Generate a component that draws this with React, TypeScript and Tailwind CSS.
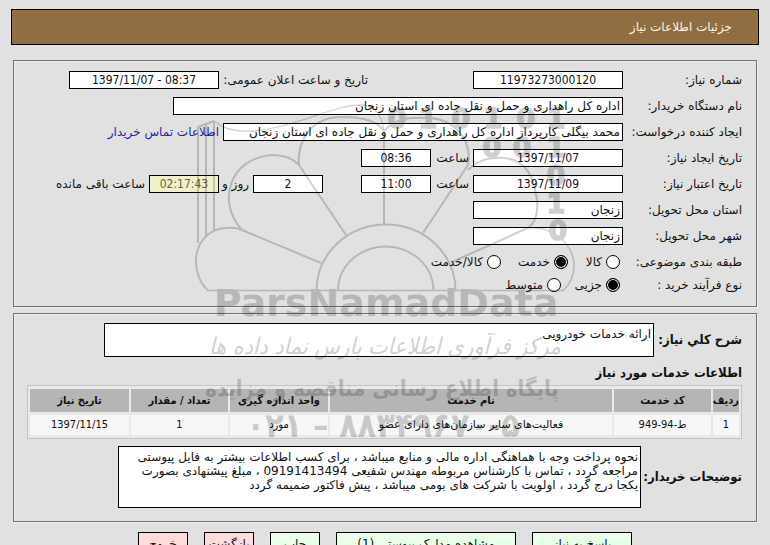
import React from "react";

const NUM = "font-['DejaVu_Sans_Condensed','DejaVu_Sans',sans-serif]";
const STRONG = "font-['DejaVu_Sans_Condensed','DejaVu_Sans',sans-serif] text-[13px] font-bold whitespace-nowrap";
const FIELD = "h-[18px] shrink-0 border border-black bg-white px-[2px] text-xs leading-4 outline-none";

function Row({ label, htmlFor, children }: { label: string; htmlFor?: string; children: React.ReactNode }) {
  return (
    <div className="flex h-[18px] items-center gap-1">
      <label htmlFor={htmlFor} className="w-[115px] shrink-0 whitespace-nowrap">
        {label}
      </label>
      {children}
    </div>
  );
}

function Radio({ name, label, checked, width }: { name: string; label: string; checked?: boolean; width: string }) {
  return (
    <label className={"flex items-center gap-1 whitespace-nowrap " + width}>
      <input
        type="radio"
        name={name}
        defaultChecked={checked}
        className="size-[14px] shrink-0 appearance-none rounded-full border border-black bg-white checked:bg-black checked:shadow-[inset_0_0_0_1px_white]"
      />
      {label}
    </label>
  );
}

const DIGITS = [
  { d: "0", x: 397, y: 128 },
  { d: "1", x: 428, y: 128 },
  { d: "0", x: 461, y: 128 },
  { d: "1", x: 493, y: 128 },
  { d: "0", x: 526, y: 128 },
  { d: "1", x: 556, y: 128 },
  { d: "0", x: 492, y: 157 },
  { d: "0", x: 522, y: 157 },
  { d: "1", x: 556, y: 157 },
  { d: "0", x: 556, y: 185 },
  { d: "1", x: 556, y: 213 },
  { d: "0", x: 558, y: 240 },
];

function Watermark() {
  return (
    <svg
      aria-hidden="true"
      viewBox="185 90 400 370"
      direction="ltr"
      className="pointer-events-none absolute top-[90px] left-1/2 h-[370px] w-[400px] -translate-x-1/2 opacity-[0.18]"
    >
      <g fill="none" stroke="#000" strokeWidth="2">
        <path d="M208 290.5H563" strokeWidth="1.3" />
        <path d="M316.5 290.5a69.5 66 0 0 1 139 0M338 290.5a47.7 44 0 0 1 95.4 0" />
        <path d="M208 290.5C190 274 191 237 219 229Q234 226 242 230L321 263" />
        <path d="M242 230C216 201 230 158 272 155Q290 155 299 165L346 235" />
        <path d="M299 165C297 140 312 116 343 117Q375 117 384 131V225" />
        <path d="M384 131C396 118 410 117 430 118C455 120 472 139 468 165L423 233" />
        <path d="M468 170C480 157 501 155 516 161C530 168 534 181 537 200Q539 220 528 228L452 262" />
        <path d="M528 228C547 226 570 238 574 262Q575 280 563 290.5" strokeWidth="1.5" />
        <path d="M198 243V127L214 121M206 237V124M214 230V121" />
        <path d="M214 121C230 135 255 132 278 127C312 119 340 104 364 105Q381 108 384 131" strokeWidth="1.2" />
      </g>
      <g textAnchor="middle" fontSize="27" stroke="#000" strokeWidth="1.5" className="font-['DejaVu_Sans'] font-bold">
        {DIGITS.map((g, i) => (
          <text key={i} x={g.x} y={g.y}>
            {g.d}
          </text>
        ))}
      </g>
      <text x="386" y="316" textAnchor="middle" fontSize="38" className="font-['DejaVu_Sans'] font-bold">
        ParsNamadData
      </text>
      <g textAnchor="middle" direction="rtl">
        <text x="385" y="354" fontSize="23" className="font-['DejaVu_Sans_Condensed'] italic">
          مرکز فرآوری اطلاعات پارس نماد داده ها
        </text>
        <text x="382" y="396" fontSize="22" className="font-['DejaVu_Sans_Condensed'] font-bold">
          پایگاه اطلاع رسانی مناقصه و مزایده
        </text>
      </g>
      <text x="383" y="437" textAnchor="middle" fontSize="34" className="font-['DejaVu_Sans_Condensed'] font-bold">
        ۰۲۱ – ۸۸۳۴۹۶۷۰-۵
      </text>
    </svg>
  );
}

const TH = "h-[23px] bg-[#b5b5b5] p-0 text-center text-[11px] font-bold whitespace-nowrap";
const TD = "h-[20px] bg-[#f7f7f7] p-0 text-center text-[11px] whitespace-nowrap";
const BUTTON = "h-6 shrink-0 border border-black text-xs whitespace-nowrap";
const PANEL = "border border-[#707070] shadow-[inset_1px_1px_0_#eeeeee,1px_1px_0_#eeeeee]";

export default function App() {
  return (
    <div
      dir="rtl"
      className="relative h-screen overflow-hidden bg-[#e1e1e1] font-['DejaVu_Sans',sans-serif] text-xs leading-4 text-[#111]"
    >
      <header className="mx-[11px] mt-[9px] flex h-9 items-center border border-black bg-[#906e42] px-[26px]">
        <h1 className="text-xs text-[#fff4e0]">جزئیات اطلاعات نیاز</h1>
      </header>

      <main className="mx-[13px] mt-[15px] flex flex-col gap-[6px]">
        <section className={PANEL + " flex h-[247px] flex-col gap-2 pt-[10px] pr-[14px] pl-[13px]"}>
          <Row label="شماره نیاز:" htmlFor="number">
            <input id="number" dir="ltr" defaultValue="11973273000120" className={FIELD + " w-[150px] text-center " + NUM} />
            <label htmlFor="announced" className="mr-[101px] w-[145px] shrink-0 whitespace-nowrap">
              تاریخ و ساعت اعلان عمومی:
            </label>
            <input
              id="announced"
              dir="ltr"
              defaultValue="1397/11/07 - 08:37"
              className={FIELD + " w-[150px] text-center " + NUM}
            />
          </Row>
          <Row label="نام دستگاه خریدار:" htmlFor="org">
            <input id="org" defaultValue="اداره کل راهداری و حمل و نقل جاده ای استان زنجان" className={FIELD + " w-[450px]"} />
          </Row>
          <Row label="ایجاد کننده درخواست:" htmlFor="creator">
            <input
              id="creator"
              defaultValue="محمد بیگلی کارپرداز اداره کل راهداری و حمل و نقل جاده ای استان زنجان"
              className={FIELD + " w-[400px]"}
            />
            <a href="#contact" className="whitespace-nowrap text-[#2a20b0]">
              اطلاعات تماس خریدار
            </a>
          </Row>
          <Row label="تاریخ ایجاد نیاز:" htmlFor="created">
            <input id="created" dir="ltr" defaultValue="1397/11/07" className={FIELD + " w-[150px] text-center " + NUM} />
            <label htmlFor="createdTime" className="w-[34px] shrink-0 whitespace-nowrap">
              ساعت
            </label>
            <input id="createdTime" dir="ltr" defaultValue="08:36" className={FIELD + " w-[70px] text-center " + NUM} />
          </Row>
          <Row label="تاریخ اعتبار نیاز:" htmlFor="valid">
            <input id="valid" dir="ltr" defaultValue="1397/11/09" className={FIELD + " w-[150px] text-center " + NUM} />
            <label htmlFor="validTime" className="w-[34px] shrink-0 whitespace-nowrap">
              ساعت
            </label>
            <input id="validTime" dir="ltr" defaultValue="11:00" className={FIELD + " w-[70px] text-center " + NUM} />
            <input id="days" dir="ltr" defaultValue="2" className={FIELD + " mr-[34px] w-[70px] text-center " + NUM} />
            <label htmlFor="days" className="w-[26px] shrink-0 whitespace-nowrap">
              روز و
            </label>
            <input
              id="remaining"
              dir="ltr"
              defaultValue="02:17:43"
              className={
                "h-[18px] w-[70px] shrink-0 border border-black bg-[#f0f0cc] px-[2px] text-center text-xs leading-4 text-[#666644] outline-none " +
                NUM
              }
            />
            <label htmlFor="remaining" className="whitespace-nowrap">
              ساعت باقی مانده
            </label>
          </Row>
          <Row label="استان محل تحویل:" htmlFor="province">
            <input id="province" defaultValue="زنجان" className={FIELD + " w-[150px]"} />
          </Row>
          <Row label="شهر محل تحویل:" htmlFor="city">
            <input id="city" defaultValue="زنجان" className={FIELD + " w-[150px]"} />
          </Row>
          <div className="flex flex-col gap-[5px]">
            <div role="radiogroup" aria-labelledby="kind" className="flex h-[18px] items-center">
              <span id="kind" className="w-[122px] shrink-0 whitespace-nowrap">
                طبقه بندی موضوعی:
              </span>
              <Radio name="kind" label="کالا" width="w-[52px]" />
              <Radio name="kind" label="خدمت" checked width="w-[67px]" />
              <Radio name="kind" label="کالا/خدمت" width="" />
            </div>
            <div role="radiogroup" aria-labelledby="process" className="flex h-[18px] items-center">
              <span id="process" className="w-[122px] shrink-0 whitespace-nowrap">
                نوع فرآیند خرید :
              </span>
              <Radio name="process" label="جزیی" checked width="w-[59px]" />
              <Radio name="process" label="متوسط" width="" />
            </div>
          </div>
        </section>

        <section className={PANEL + " flex h-[209px] flex-col pt-[9px] pr-[14px] pl-[13px]"}>
          <div className="flex items-center gap-1">
            <label htmlFor="summary" className={"w-[84px] shrink-0 " + STRONG}>
              شرح کلي نیاز:
            </label>
            <textarea
              id="summary"
              defaultValue="ارائه خدمات خودرویی"
              className="ml-[77px] h-[34px] min-w-0 flex-1 resize-none overflow-hidden border border-black bg-white px-[2px] pt-[3px] text-xs leading-[14px] outline-none"
            />
          </div>
          <h2 className={"mt-2 leading-4 " + STRONG}>اطلاعات خدمات مورد نیاز</h2>
          <table
            className={
              "mt-1 w-full table-fixed border-separate border-spacing-x-[2px] border-spacing-y-[3px] border border-[#c4c4c4] bg-[#e9e9e9] " +
              NUM
            }
          >
            <thead>
              <tr>
                <th className={TH + " w-[26px]"}>ردیف</th>
                <th className={TH + " w-[97px]"}>کد خدمت</th>
                <th className={TH}>نام خدمت</th>
                <th className={TH + " w-[98px]"}>واحد اندازه گیری</th>
                <th className={TH + " w-[97px]"}>تعداد / مقدار</th>
                <th className={TH + " w-[99px]"}>تاریخ نیاز</th>
              </tr>
            </thead>
            <tbody>
              <tr>
                <td className={TD}>1</td>
                <td className={TD}>ط-94-949</td>
                <td className={TD + " font-['DejaVu_Sans',sans-serif]"}>فعالیت‌های سایر سازمان‌های دارای عضو</td>
                <td className={TD}>مورد</td>
                <td className={TD}>1</td>
                <td className={TD}>1397/11/15</td>
              </tr>
            </tbody>
          </table>
          <div className="mt-[7px] flex items-center gap-1">
            <label htmlFor="notes" className={"w-[97px] shrink-0 " + STRONG}>
              توضیحات خریدار:
            </label>
            <textarea
              id="notes"
              defaultValue={
                "نحوه پرداخت وجه با هماهنگی اداره مالی و منابع میباشد ، برای کسب اطلاعات بیشتر به فایل پیوستی\nمراجعه گردد ، تماس با کارشناس مربوطه مهندس شفیعی 09191413494 ، مبلغ پیشنهادی بصورت\nیکجا درج گردد ، اولویت با شرکت های بومی میباشد ، پیش فاکتور ضمیمه گردد"
              }
              className="ml-[91px] h-[62px] min-w-0 flex-1 resize-none overflow-hidden border border-black bg-white px-[2px] pt-[3px] text-xs leading-[14px] outline-none"
            />
          </div>
        </section>
      </main>

      <footer className="mt-[10px] flex justify-center gap-4">
        <button className={BUTTON + " w-[100px] bg-[#eaffea]"}>پاسخ به نیاز</button>
        <button className={BUTTON + " w-[180px] bg-[#eaffea]"}>مشاهده مدارک پیوستی (1)</button>
        <button className={BUTTON + " w-[50px] bg-[#eaffea]"}>چاپ</button>
        <button className={BUTTON + " w-[50px] bg-[#ffdcdc]"}>بازگشت</button>
        <button className={BUTTON + " w-[50px] bg-[#ffdcdc]"}>خروج</button>
      </footer>

      <Watermark />
    </div>
  );
}
